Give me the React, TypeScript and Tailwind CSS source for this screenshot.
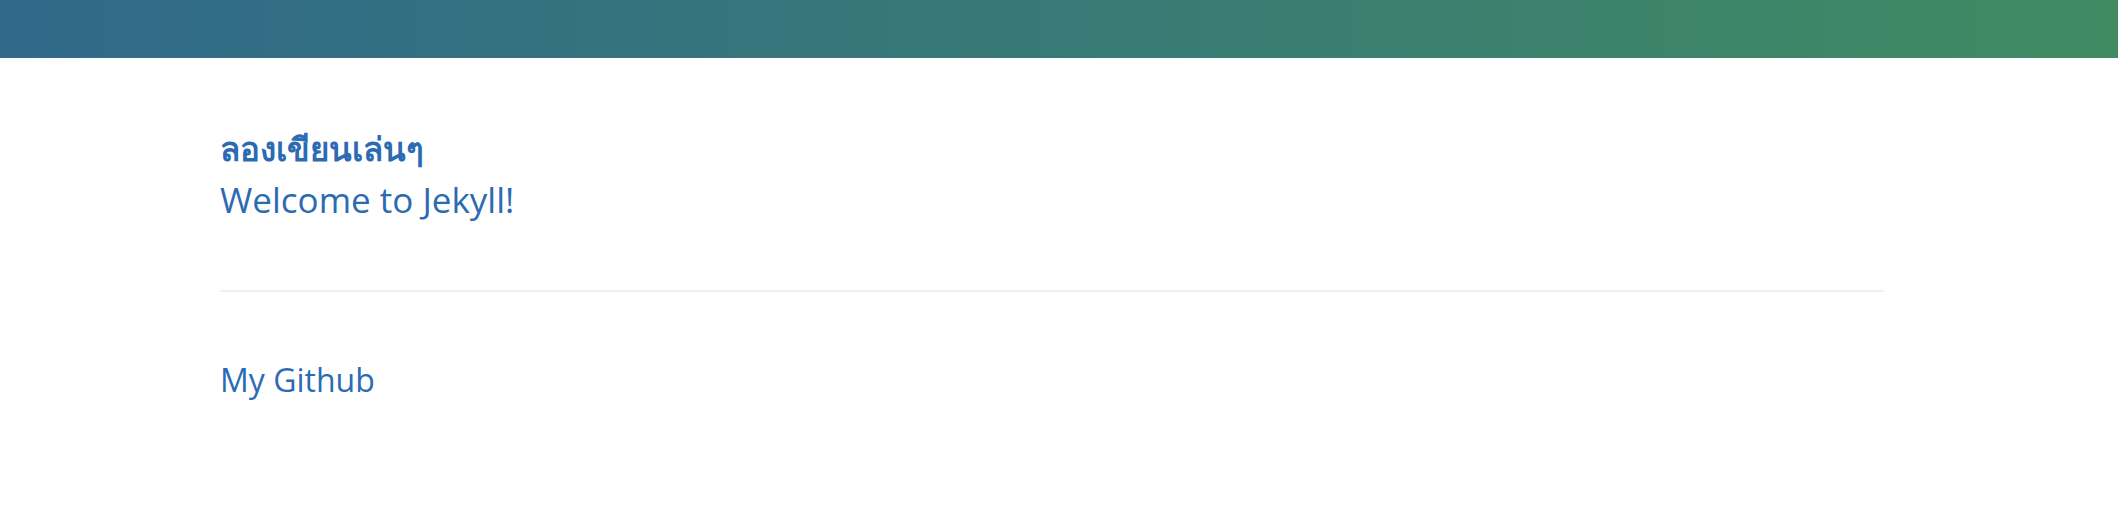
export default function App() {
  return (
    <div className="min-h-screen bg-white" style={{ fontFamily: '"Open Sans", "Noto Sans", sans-serif' }}>
      <header className="h-[58px] w-full bg-[linear-gradient(90deg,#30698a,#408b62)]" />
      <main className="pl-[220px] pr-[234px]">
        <div className="pt-[69px]">
          <a href="#" className="block text-[33px] font-bold leading-[44px] text-[#2c6bb4]">ลองเขียนเล่นๆ</a>
          <a href="#" className="mt-[6px] block text-[35px] leading-[46px] text-[#2c6bb4]">Welcome to Jekyll!</a>
        </div>
        <hr className="mt-[67px] border-0 border-t-2 border-[#eff0f1]" />
        <div className="pt-[68px]">
          <a href="#" className="text-[32px] leading-[40px] text-[#2c6bb4]">My Github</a>
        </div>
      </main>
    </div>
  );
}
